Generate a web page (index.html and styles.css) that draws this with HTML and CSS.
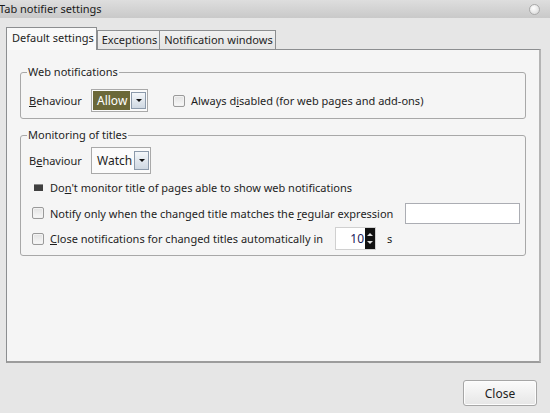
FILE: index.html
```html
<!DOCTYPE html>
<html>
<head>
<meta charset="utf-8">
<link rel="stylesheet" href="styles.css">
</head>
<body>
<div class="window">
  <div class="titlebar">
    <span class="title">Tab notifier settings</span>
    <span class="circle"></span>
  </div>
  <div class="content">
    <div class="tabs">
      <div class="tab active">Default settings</div>
      <div class="tab">Exceptions</div>
      <div class="tab">Notification windows</div>
    </div>
    <div class="panel">
      <fieldset class="group g1">
        <legend>Web notifications</legend>
        <div class="row r1">
          <span class="label"><u>B</u>ehaviour</span>
          <div class="select s-allow">
            <span class="sel-value hl">Allow</span>
            <span class="drop"><span class="tri"></span></span>
          </div>
          <span class="check c1"></span>
          <span class="ctext">Always d<u>i</u>sabled (for web pages and add-ons)</span>
        </div>
      </fieldset>
      <fieldset class="group g2">
        <legend>Monitoring of titles</legend>
        <div class="row rb">
          <span class="label">B<u>e</u>haviour</span>
          <div class="select s-watch">
            <span class="sel-value">Watch</span>
            <span class="drop"><span class="tri"></span></span>
          </div>
        </div>
        <div class="row rc">
          <span class="check dark"><span class="mark"></span></span>
          <span class="ctext">Do<u>n</u>'t monitor title of pages able to show web notifications</span>
        </div>
        <div class="row rc">
          <span class="check"></span>
          <span class="ctext">Notify only when the changed title matches the <u>r</u>egular expression</span>
          <span class="textbox"></span>
        </div>
        <div class="row rc rlast">
          <span class="check"></span>
          <span class="ctext"><u>C</u>lose notifications for changed titles automatically in</span>
          <span class="number"><span class="num">10</span><span class="spin"><span class="up"></span><span class="down"></span></span></span>
          <span class="unit">s</span>
        </div>
      </fieldset>
    </div>
    <div class="footer">
      <div class="button">Close</div>
    </div>
  </div>
</div>
</body>
</html>
```

FILE: styles.css
```css
html, body {
  margin: 0;
  padding: 0;
}
body {
  width: 550px;
  height: 413px;
  overflow: hidden;
  background: #e6e6e6;
  font-family: "Noto Sans", "Open Sans", sans-serif;
  font-size: 11px;
  color: #1e1e1e;
}
.window {
  display: flex;
  flex-direction: column;
  height: 413px;
}
.titlebar {
  height: 18px;
  background: linear-gradient(#dedede, #c9c9c9);
  display: flex;
  align-items: center;
  justify-content: space-between;
  padding-right: 10px;
}
.title {
  font-size: 11px;
  color: #1a1a1a;
  margin-left: -1px;
  line-height: 18px;
}
.circle {
  width: 9px;
  height: 9px;
  border-radius: 50%;
  border: 1px solid #a9a9a9;
  background: radial-gradient(circle at 40% 35%, #ffffff, #d4d4d4);
}
.content {
  flex: 1;
  display: flex;
  flex-direction: column;
  padding: 8px 9px 0 6px;
}
.tabs {
  display: flex;
  align-items: flex-end;
  height: 23px;
  position: relative;
  z-index: 2;
}
.tab {
  height: 18px;
  line-height: 18px;
  padding: 0 2px 0 4px;
  border: 1px solid #8c8e90;
  border-bottom: none;
  background: linear-gradient(#f0f0f0, #e4e4e4);
  margin-left: -1px;
  white-space: nowrap;
}
.tab.active {
  line-height: 20px;
  padding: 0 2px 0 5px;
  background: #f9f9f9;
  margin-left: 0;
  margin-bottom: -1px;
  height: 22px;
}
.tab.active + .tab {
  margin-left: 0;
}
.panel {
  height: 314px;
  box-sizing: border-box;
  background: #f5f5f5;
  border: 1px solid #8c8e90;
  border-bottom: 2px solid #9c9c9c;
  border-right: 2px solid #b4b4b4;
  padding: 14px 13px 0 13px;
  display: flex;
  flex-direction: column;
  gap: 8px;
}
.group {
  margin: 0;
  padding: 0 5px 0 8px;
  border: 1px solid #a8a8a8;
  border-radius: 3px;
  min-width: 0;
}
.group legend {
  padding: 0 1px;
  margin-left: -2px;
  line-height: 16px;
  color: #1e1e1e;
}
.row {
  display: flex;
  align-items: center;
  white-space: nowrap;
}
.r1 {
  height: 23px;
  margin-top: 9px;
  margin-bottom: 6px;
}
.rb {
  height: 27px;
  margin-top: 4px;
}
.rc {
  height: 26px;
  padding-left: 3px;
}
.rlast {
  height: 25px;
  margin-bottom: 4px;
}
.label {
  width: 62px;
}
.select {
  box-sizing: border-box;
  display: flex;
  align-items: center;
  border: 1px solid #a9a9a9;
  background: #fbfbfb;
  padding: 1px;
}
.s-allow {
  width: 57px;
  height: 23px;
}
.s-watch {
  width: 60px;
  height: 27px;
}
.sel-value {
  flex: 1;
  align-self: stretch;
  display: flex;
  align-items: center;
  padding-left: 4px;
  font-size: 12px;
}
.sel-value.hl {
  background: #6b6839;
  color: #ffffff;
}
.drop {
  box-sizing: border-box;
  width: 15px;
  height: 17px;
  margin-left: 1px;
  border: 1px solid #8c9aab;
  background: linear-gradient(#f4f7fa, #cfd8e2);
  display: flex;
  align-items: center;
  justify-content: center;
}
.s-watch .drop {
  height: 19px;
}
.tri {
  width: 0;
  height: 0;
  border-left: 3px solid transparent;
  border-right: 3px solid transparent;
  border-top: 3px solid #111;
}
.check {
  box-sizing: border-box;
  width: 12px;
  height: 12px;
  border: 1px solid #9a9a9a;
  border-radius: 2px;
  background: linear-gradient(#e2e2e2, #f8f8f8);
  box-shadow: inset 0 0 0 1px #f2f2f2;
  margin-right: 6px;
  display: flex;
  align-items: center;
  justify-content: center;
  flex: none;
}
.c1 {
  margin-left: 25px;
}
.check.dark {
  border: none;
  background: none;
  box-shadow: none;
}
.check.dark .mark {
  width: 9px;
  height: 6px;
  background: #404040;
  border-top: 1px solid #8a8a8a;
}
.ctext {
  color: #1e1e1e;
}
.textbox {
  flex: 1;
  height: 21px;
  box-sizing: border-box;
  margin-left: 12px;
  border: 1px solid #abadb3;
  background: #ffffff;
}
.number {
  box-sizing: border-box;
  display: flex;
  align-items: stretch;
  margin-left: 12px;
  width: 41px;
  height: 23px;
  border: 1px solid #d0d0d0;
  background: #ffffff;
}
.num {
  flex: 1;
  text-align: right;
  line-height: 21px;
  padding-right: 1px;
  color: #1a1a5a;
  font-size: 12px;
}
.spin {
  width: 10px;
  background: #111;
  display: flex;
  flex-direction: column;
  justify-content: space-around;
  align-items: center;
  padding: 2px 0;
}
.up {
  width: 0;
  height: 0;
  border-left: 3px solid transparent;
  border-right: 3px solid transparent;
  border-bottom: 3px solid #e0e0e0;
}
.down {
  width: 0;
  height: 0;
  border-left: 3px solid transparent;
  border-right: 3px solid transparent;
  border-top: 3px solid #e0e0e0;
}
.unit {
  margin-left: 11px;
}
.footer {
  display: flex;
  justify-content: flex-end;
  padding-top: 17px;
  padding-right: 4px;
}
.button {
  box-sizing: border-box;
  width: 74px;
  height: 26px;
  border: 1px solid #a6a6a6;
  border-radius: 3px;
  background: linear-gradient(#fbfbfb, #e6e6e6);
  box-shadow: inset 0 0 0 1px #fdfdfd;
  display: flex;
  align-items: center;
  justify-content: center;
  font-size: 12px;
  color: #1e1e1e;
}
```
